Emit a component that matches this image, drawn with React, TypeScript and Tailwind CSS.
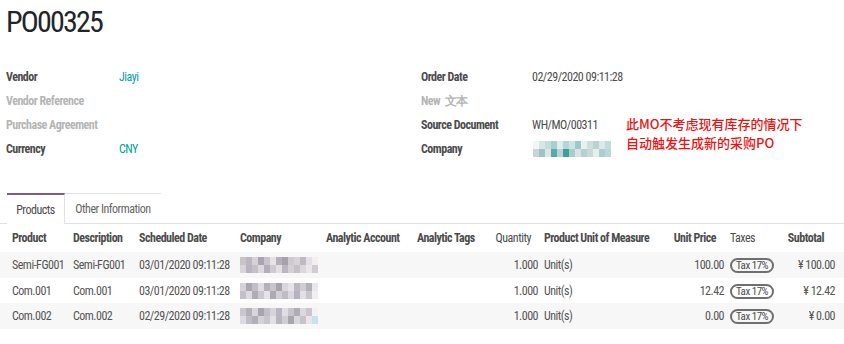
const fieldsLeft = [
  { label: "Vendor", value: "Jiayi", faded: false, link: true },
  { label: "Vendor Reference", value: "", faded: true, link: false },
  { label: "Purchase Agreement", value: "", faded: true, link: false },
  { label: "Currency", value: "CNY", faded: false, link: true },
];

const rows = [
  { product: "Semi-FG001", desc: "Semi-FG001", date: "03/01/2020 09:11:28", price: "100.00", subtotal: "¥ 100.00", h: "h-[26px]", bg: "bg-[#f7f7f7]" },
  { product: "Com.001", desc: "Com.001", date: "03/01/2020 09:11:28", price: "12.42", subtotal: "¥ 12.42", h: "h-[25px]", bg: "bg-white" },
  { product: "Com.002", desc: "Com.002", date: "02/29/2020 09:11:28", price: "0.00", subtotal: "¥ 0.00", h: "h-[26px]", bg: "bg-[#f7f7f7]" },
];

const mosaics: string[][][] = [
  [
    ["#c9c3c9", "#bdb6c0", "#d7d0d6", "#a9a4b2", "#c8c3cc", "#e6e2e6", "#b6aebb", "#a8a1ad", "#cfcad0", "#d9d3d8", "#bfb9c3", "#e5e0e5", "#f1eff1"],
    ["#d9d5da", "#b8b3bf", "#c5c0c8", "#ddd9de", "#b3aeb9", "#cfcad1", "#e3dfe3", "#bcb6c0", "#d5d0d6", "#c6c1c9", "#dcd7dc", "#eae7ea", "#d1ccd3"],
  ],
  [
    ["#d6d2d8", "#aaa6b4", "#c2bec9", "#e0dde2", "#b4b0bc", "#c8c5cd", "#a6a2ae", "#d9d6dc", "#e6e4e8", "#bcb8c2", "#cfccd3", "#b3b0ba", "#e9e7eb"],
    ["#c4c0c9", "#dedbe0", "#b0acb7", "#cbc8cf", "#e5e3e7", "#aeaab5", "#d2cfd6", "#c0bcc5", "#dad7dd", "#b7b3be", "#e2e0e4", "#c9c6cd", "#f0eef1"],
  ],
  [
    ["#cbc7ce", "#b5b1bb", "#d8d5db", "#a9a5b0", "#c3bfc8", "#d6d3d9", "#bab6c0", "#e1dee3", "#c7c4cb", "#b0acb6", "#dcd9de", "#c9c6cd", "#f2f1f3"],
    ["#dedbe0", "#c1bdc6", "#b3afba", "#d4d1d7", "#c8c5cc", "#e3e1e5", "#b9b5bf", "#d0cdd4", "#a9a5b0", "#dad7dc", "#c5c2c9", "#e8e6ea", "#c9e0ee"],
  ],
];

const companyMosaic: string[][] = [
  ["#f2f6f6", "#d9e6e6", "#c4dcdc", "#a6d0d0", "#e1ecec", "#b4d6d6", "#cfe2e2", "#9fc9c9", "#e8f0f0", "#cfdede", "#b9d3d3", "#dde9e9", "#c3dbdb"],
  ["#c6d5d5", "#9cc4c4", "#dbe7e7", "#58aaaa", "#b8d4d4", "#3e9d9d", "#a6cccc", "#d8e4e4", "#b6cfcf", "#c7dada", "#e6eeee", "#a9cfcf", "#bcd7d7"],
];

function Mosaic({ data, cell }: { data: string[][]; cell: string }) {
  return (
    <div className="flex flex-col">
      {data.map((r, i) => (
        <div key={i} className="flex">
          {r.map((c, j) => (
            <div key={j} className={cell} style={{ backgroundColor: c }} />
          ))}
        </div>
      ))}
    </div>
  );
}

function Field({ label, value, faded, link }: { label: string; value: string; faded: boolean; link: boolean }) {
  return (
    <div className="flex h-[24px] items-center">
      <div className={`w-[113px] font-bold ${faded ? "text-[#b5b5b5]" : "text-[#4c4c4c]"}`}>{label}</div>
      <div className={link ? "text-[#00a09d]" : "text-[#4c4c4c]"}>{value}</div>
    </div>
  );
}

const cols = "grid grid-cols-[61px_66px_101px_86px_91px_77px_44px_122px_64px_56px_55px] pl-[12px]";

function TaxBadge() {
  return (
    <span className="inline-flex h-[15px] items-center rounded-full border-2 border-[#6f6f6f] px-[4px] text-[11px] leading-none text-[#4c4c4c]">
      Tax 17%
    </span>
  );
}

export default function App() {
  return (
    <div className="relative h-[344px] w-[844px] overflow-hidden whitespace-nowrap bg-white font-['Roboto_Condensed',Roboto,sans-serif] text-[12px] tracking-[-0.5px] text-[#4c4c4c]">
      <div className="pl-[6px] pt-[5px] text-[30px] leading-[34px] tracking-[-1.8px] text-[#212529]">PO00325</div>

      <div className="mt-[26px] flex">
        <div className="w-[415px] pl-[6px]">
          {fieldsLeft.map((f) => (
            <Field key={f.label} {...f} />
          ))}
        </div>
        <div className="w-[429px] pl-[6px]">
          <div className="flex h-[24px] items-center">
            <div className="w-[111px] font-bold text-[#4c4c4c]">Order Date</div>
            <div>02/29/2020 09:11:28</div>
          </div>
          <div className="flex h-[24px] items-center">
            <div className="w-[111px] font-bold text-[#b5b5b5]">New&nbsp; 文本</div>
          </div>
          <div className="flex h-[24px] items-center">
            <div className="w-[111px] font-bold text-[#4c4c4c]">Source Document</div>
            <div>WH/MO/00311</div>
          </div>
          <div className="flex h-[24px] items-center">
            <div className="w-[112px] font-bold text-[#4c4c4c]">Company</div>
            <Mosaic data={companyMosaic} cell="h-[8px] w-[6px]" />
          </div>
        </div>
      </div>

      <div className="absolute left-[626px] top-[114px] font-['Noto_Sans_CJK_SC',serif] text-[13px] font-medium leading-[19px] tracking-[0px] text-[#ee1111]">
        <div>此MO不考虑现有库存的情况下</div>
        <div>自动触发生成新的采购PO</div>
      </div>

      <div className="mt-[32px] flex h-[31px] items-stretch">
        <div className="w-[7px] border-b border-[#dee2e6]" />
        <div className="flex w-[58px] items-center justify-center border-r border-t-2 border-r-[#dee2e6] border-t-[#875a7b] pt-[1px] text-[#4c4c4c]">
          Products
        </div>
        <div className="flex w-[96px] items-center justify-center border-b border-t border-b-[#dee2e6] border-t-[#dee2e6] text-[#666]">
          Other Information
        </div>
        <div className="flex-1 border-b border-[#dee2e6]" />
      </div>

      <div className={`${cols} h-[28px] items-center font-bold text-[#4c4c4c] shadow-[0_2px_3px_rgba(0,0,0,0.06)]`}>
        <div>Product</div>
        <div>Description</div>
        <div>Scheduled Date</div>
        <div>Company</div>
        <div>Analytic Account</div>
        <div>Analytic Tags</div>
        <div className="pr-[7px] text-right font-normal">Quantity</div>
        <div className="pl-[6px]">Product Unit of Measure</div>
        <div className="pr-[8px] text-right">Unit Price</div>
        <div className="pl-[6px] font-normal">Taxes</div>
        <div className="pr-[11px] text-right">Subtotal</div>
      </div>

      {rows.map((r, i) => (
        <div key={i} className={`${cols} ${r.h} ${r.bg} items-center text-[#555]`}>
          <div>{r.product}</div>
          <div>{r.desc}</div>
          <div>{r.date}</div>
          <div className="flex items-center">
            <Mosaic data={mosaics[i]} cell="h-[8px] w-[6px]" />
          </div>
          <div />
          <div />
          <div className="text-right">1.000</div>
          <div className="pl-[6px]">Unit(s)</div>
          <div className="text-right">{r.price}</div>
          <div className="pl-[6px]">
            <TaxBadge />
          </div>
          <div className="text-right">{r.subtotal}</div>
        </div>
      ))}
    </div>
  );
}
